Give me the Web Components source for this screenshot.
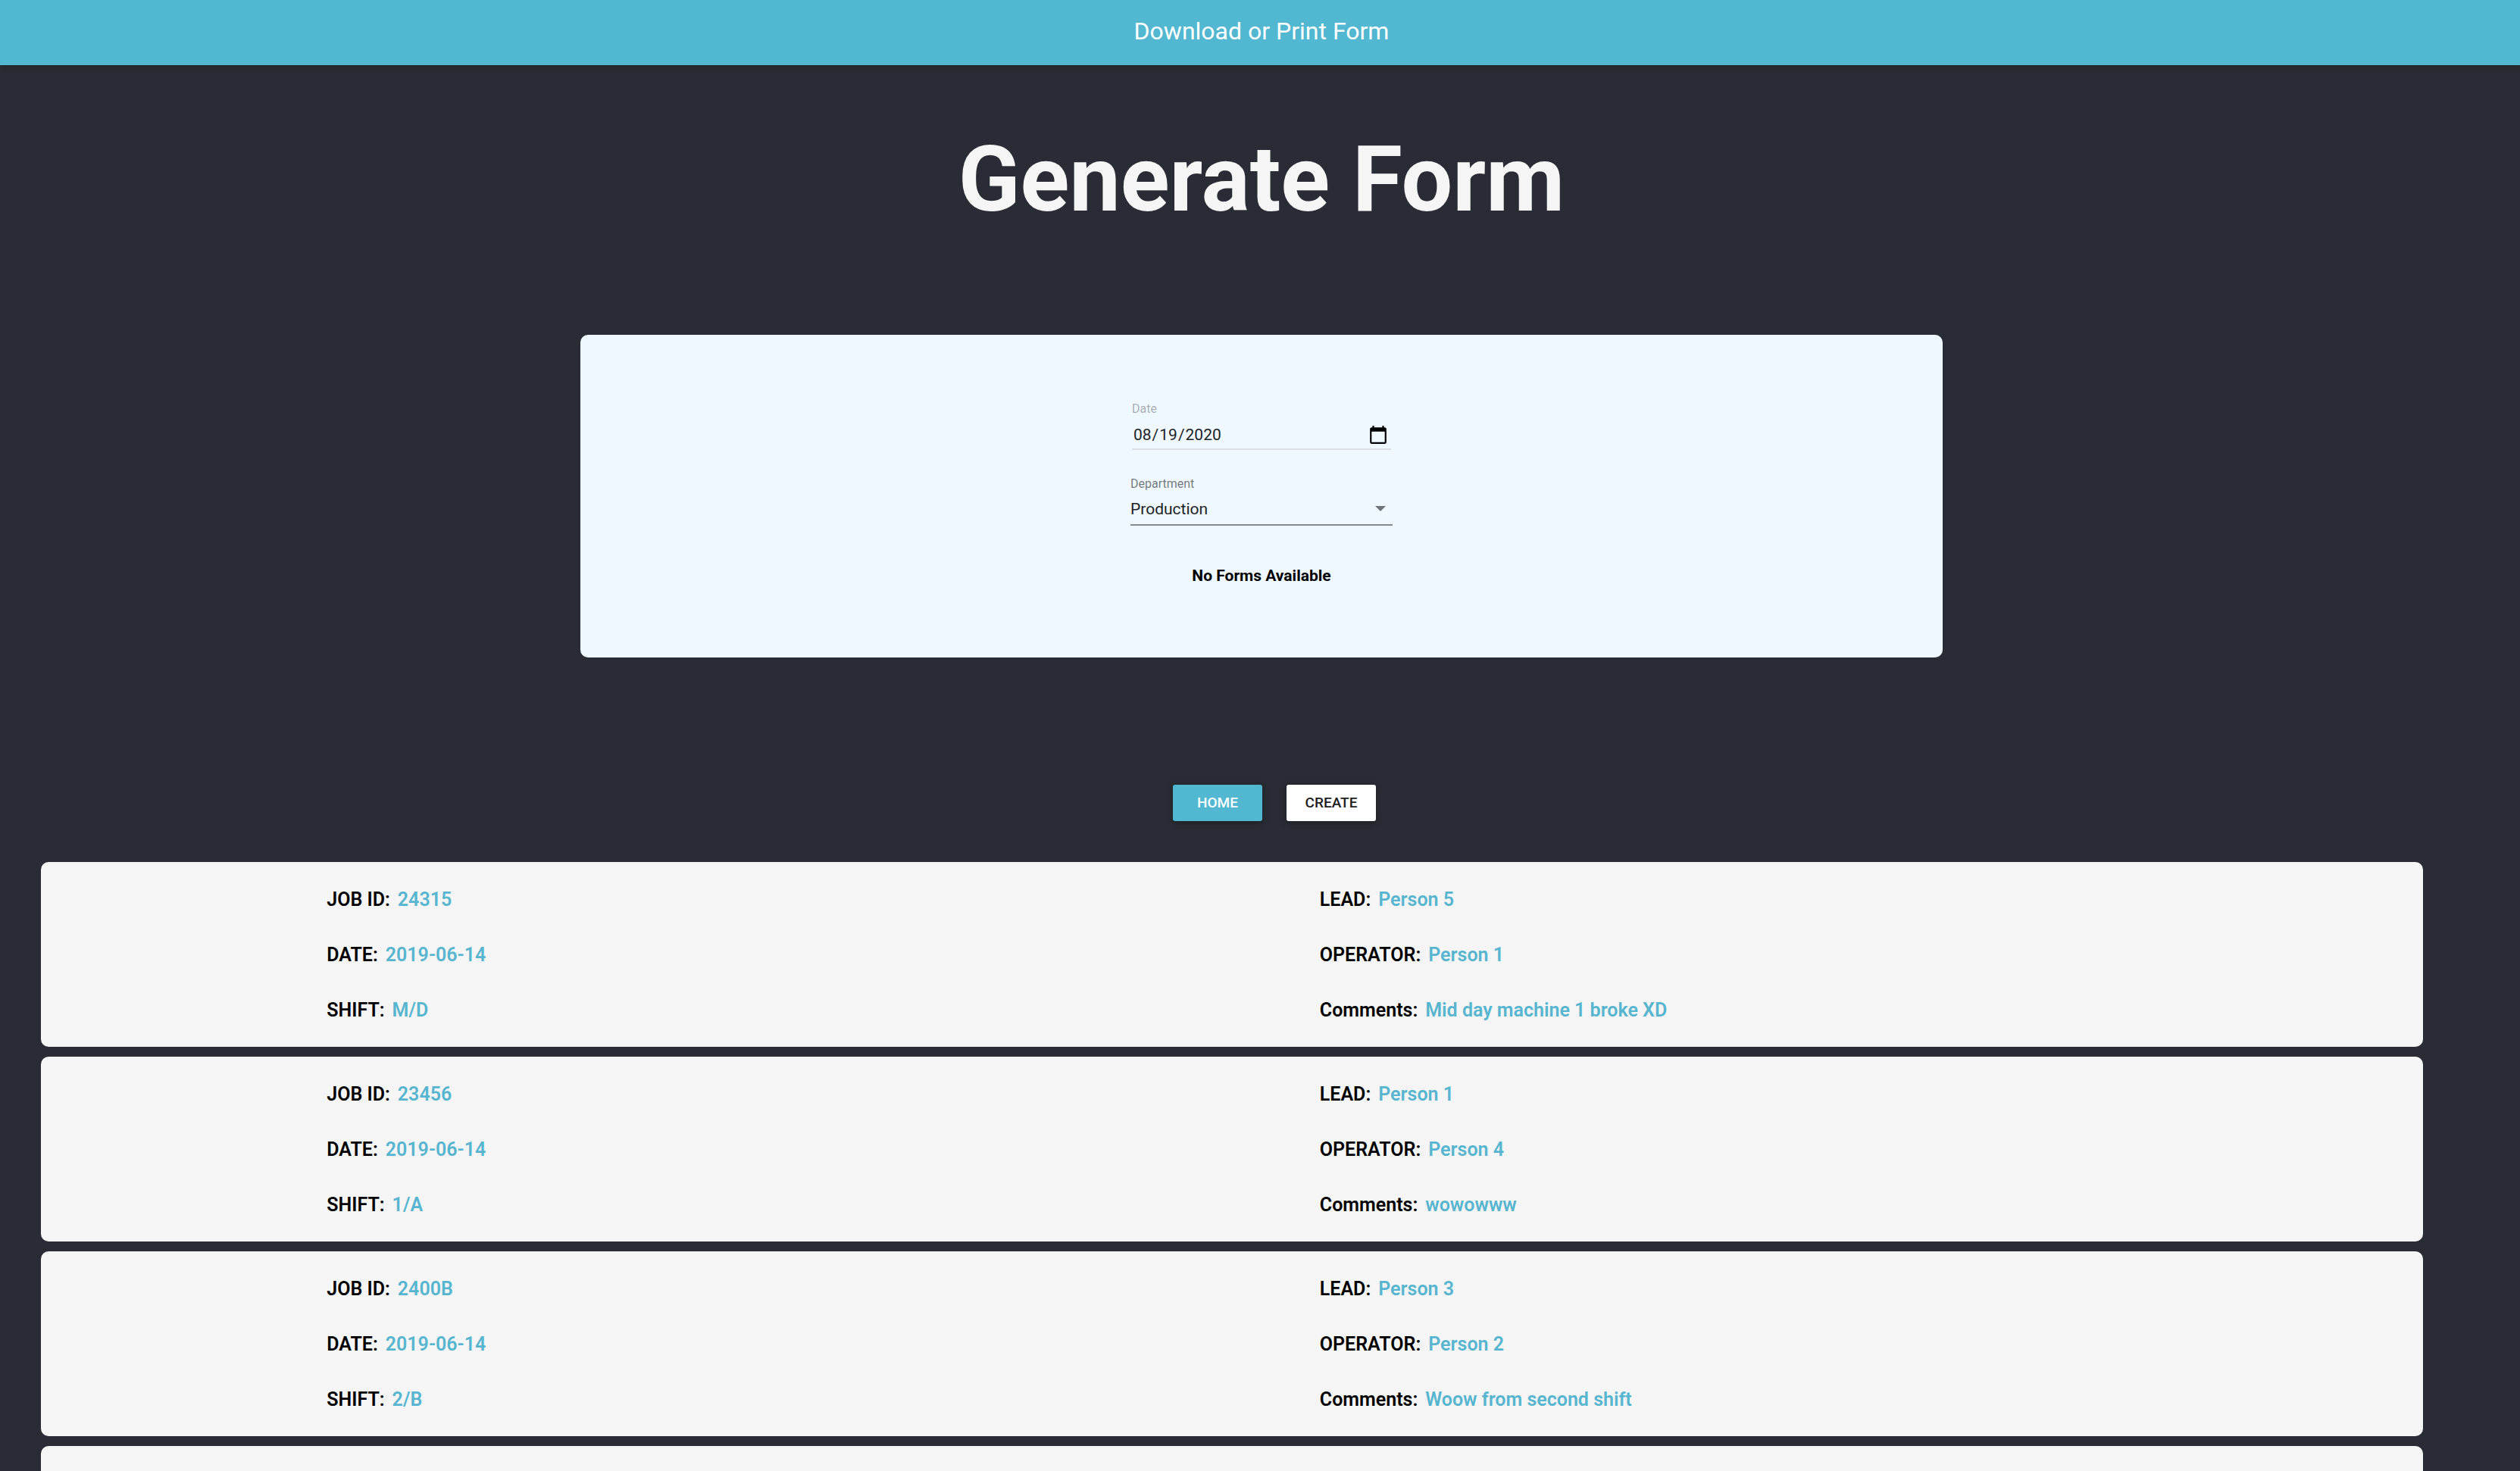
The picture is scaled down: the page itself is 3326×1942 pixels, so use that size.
<!DOCTYPE html>
<html lang="en">
<head>
<meta charset="utf-8">
<title>Generate Form</title>
<style>
  html { background: #292c34; }
  body { margin: 0; font-family: Roboto, "Liberation Sans", sans-serif; color: #000; overflow-x: hidden; }
</style>
</head>
<body>
<form-page></form-page>

<template id="app-bar-template">
  <style>
    :host { display: block; position: relative; }
    header {
      display: flex; align-items: center; justify-content: center;
      height: 86px; padding: 0 0 4px 4px; box-sizing: border-box;
      background: #52b7d0; color: #fff; font-size: 32px; line-height: 38px;
      box-shadow: 0 2px 8px rgba(0, 0, 0, .2);
    }
  </style>
  <header><slot></slot></header>
</template>

<template id="date-field-template">
  <style>
    :host { display: flex; flex-direction: column; gap: 6px; margin: 0 2px; }
    label { font-size: 16px; line-height: 20px; color: rgba(0, 0, 0, .32); }
    input {
      font: 21px/30px Roboto, "Liberation Sans", sans-serif;
      color: #202326; width: 100%; height: 38px; box-sizing: border-box;
      margin: 0; padding: 0 4px 0 1px; border: 0; border-bottom: 2px solid #dcdfe3;
      background: none; outline: 0; color-scheme: light;
    }
    input::-webkit-calendar-picker-indicator { width: 26px; height: 26px; padding: 0; background-size: 26px 26px; }
  </style>
  <label for="date">Date</label>
  <input id="date" type="date" value="2020-08-19">
</template>

<template id="department-field-template">
  <style>
    :host { display: flex; flex-direction: column; gap: 2px; }
    label { font-size: 16px; line-height: 20px; color: rgba(0, 0, 0, .54); }
    .box { display: grid; align-items: center; border-bottom: 2px solid #868b8f; }
    select, svg { grid-area: 1 / 1; }
    select {
      appearance: none; font: 21px/40px Roboto, "Liberation Sans", sans-serif;
      color: #202326; width: 100%; height: 41px; margin: 0; padding: 0 40px 0 0;
      border: 0; background: none; outline: 0;
    }
    svg { justify-self: end; margin-right: 9px; pointer-events: none; }
  </style>
  <label for="department">Department</label>
  <div class="box">
    <select id="department"><option>Production</option></select>
    <svg width="14" height="7" viewBox="0 0 14 7" aria-hidden="true"><path d="M0 0h14L7 7z" fill="#6f7478"/></svg>
  </div>
</template>

<template id="form-panel-template">
  <style>
    :host {
      display: flex; flex-direction: column; align-items: center; box-sizing: border-box;
      width: 54.1%; margin: 0 auto; padding: 88px 0 95px; border-radius: 10px; background: #f0f8ff;
    }
    .fields { display: flex; flex-direction: column; gap: 35px; width: 346px; }
    p { margin: 53px 0 0; font-size: 21px; line-height: 26px; font-weight: 700; }
  </style>
  <div class="fields"><slot></slot></div>
  <p>No Forms Available</p>
</template>

<template id="action-button-template">
  <style>
    :host { display: block; }
    button {
      width: 118px; height: 48px; margin: 0; padding: 0; border: 0; border-radius: 3px;
      font: 500 19px/30px Roboto, "Liberation Sans", sans-serif;
      background: #fff; color: #202020; box-shadow: 0 2px 8px rgba(0, 0, 0, .3);
    }
    :host([primary]) button { background: #52b7d0; color: #fff; }
  </style>
  <button type="button"><slot></slot></button>
</template>

<template id="job-card-template">
  <style>
    :host {
      display: grid; grid-template-columns: 9fr 10fr; box-sizing: border-box;
      min-height: 244px; padding: 13px 0 12px 12%; border-radius: 10px; background: #f5f5f5;
    }
    dl { margin: 0; }
    .row { display: flex; gap: 10px; font-size: 25px; line-height: 73px; font-weight: 600; }
    dt, dd { margin: 0; }
    dd { color: #57b5cf; }
  </style>
  <dl class="left"></dl>
  <dl class="right"></dl>
</template>

<template id="form-page-template">
  <style>
    :host { display: block; height: 100vh; overflow: hidden; }
    main { padding-left: 4px; }
    h1 { margin: 0; padding: 76px 0 130px; font-size: 120px; line-height: 150px; font-weight: 700; text-align: center; color: #f5f5f5; }
    nav { display: flex; justify-content: center; gap: 32px; padding: 168px 0 54px 34px; }
    .jobs { display: flex; flex-direction: column; gap: 13px; margin: 0 128px 40px 50px; }
  </style>
  <app-bar>Download or Print Form</app-bar>
  <main>
    <h1>Generate Form</h1>
    <form-panel>
      <date-field></date-field>
      <department-field></department-field>
    </form-panel>
    <nav>
      <action-button primary>HOME</action-button>
      <action-button>CREATE</action-button>
    </nav>
    <section class="jobs">
      <job-card job="24315" date="2019-06-14" shift="M/D" lead="Person 5" operator="Person 1" comments="Mid day machine 1 broke XD"></job-card>
      <job-card job="23456" date="2019-06-14" shift="1/A" lead="Person 1" operator="Person 4" comments="wowowww"></job-card>
      <job-card job="2400B" date="2019-06-14" shift="2/B" lead="Person 3" operator="Person 2" comments="Woow from second shift"></job-card>
      <job-card></job-card>
    </section>
  </main>
</template>

<script>
  class TemplateElement extends HTMLElement {
    constructor() {
      super();
      this.attachShadow({ mode: 'open' });
      const template = document.getElementById(this.localName + '-template');
      this.shadowRoot.append(document.importNode(template.content, true));
    }
  }

  class JobCard extends TemplateElement {
    connectedCallback() {
      this.fill('.left', [['JOB ID:', 'job'], ['DATE:', 'date'], ['SHIFT:', 'shift']]);
      this.fill('.right', [['LEAD:', 'lead'], ['OPERATOR:', 'operator'], ['Comments:', 'comments']]);
    }
    fill(selector, rows) {
      const list = this.shadowRoot.querySelector(selector);
      list.replaceChildren();
      for (const [label, name] of rows) {
        if (!this.hasAttribute(name)) continue;
        const row = document.createElement('div');
        const term = document.createElement('dt');
        const value = document.createElement('dd');
        row.className = 'row';
        term.textContent = label;
        value.textContent = this.getAttribute(name);
        row.append(term, value);
        list.append(row);
      }
    }
  }

  customElements.define('app-bar', class extends TemplateElement {});
  customElements.define('date-field', class extends TemplateElement {});
  customElements.define('department-field', class extends TemplateElement {});
  customElements.define('form-panel', class extends TemplateElement {});
  customElements.define('action-button', class extends TemplateElement {});
  customElements.define('job-card', JobCard);
  customElements.define('form-page', class extends TemplateElement {});
</script>
</body>
</html>
